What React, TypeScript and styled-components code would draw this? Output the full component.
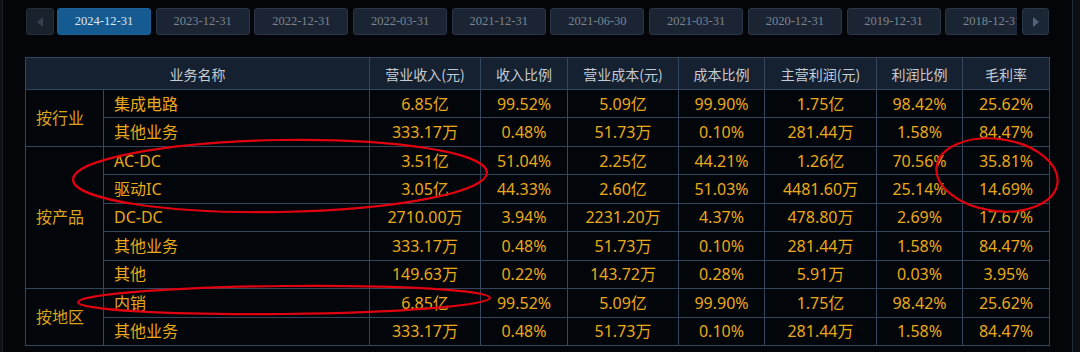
import { createGlobalStyle } from 'styled-components'
import styled from 'styled-components'

const GlobalStyle = createGlobalStyle`
  html, body {
    margin: 0;
    padding: 0;
    background: #0c0f13;
    overflow: hidden;
  }
`

const DATES = [
  '2024-12-31',
  '2023-12-31',
  '2022-12-31',
  '2022-03-31',
  '2021-12-31',
  '2021-06-30',
  '2021-03-31',
  '2020-12-31',
  '2019-12-31',
  '2018-12-31',
]

const HEADERS = ['营业收入(元)', '收入比例', '营业成本(元)', '成本比例', '主营利润(元)', '利润比例', '毛利率']
const COL_WIDTHS = [78, 266, 111, 87, 111, 86, 112, 86, 87]

type Row = { name: string; values: string[] }
type Group = { label: string; rows: Row[] }

const GROUPS: Group[] = [
  {
    label: '按行业',
    rows: [
      { name: '集成电路', values: ['6.85亿', '99.52%', '5.09亿', '99.90%', '1.75亿', '98.42%', '25.62%'] },
      { name: '其他业务', values: ['333.17万', '0.48%', '51.73万', '0.10%', '281.44万', '1.58%', '84.47%'] },
    ],
  },
  {
    label: '按产品',
    rows: [
      { name: 'AC-DC', values: ['3.51亿', '51.04%', '2.25亿', '44.21%', '1.26亿', '70.56%', '35.81%'] },
      { name: '驱动IC', values: ['3.05亿', '44.33%', '2.60亿', '51.03%', '4481.60万', '25.14%', '14.69%'] },
      { name: 'DC-DC', values: ['2710.00万', '3.94%', '2231.20万', '4.37%', '478.80万', '2.69%', '17.67%'] },
      { name: '其他业务', values: ['333.17万', '0.48%', '51.73万', '0.10%', '281.44万', '1.58%', '84.47%'] },
      { name: '其他', values: ['149.63万', '0.22%', '143.72万', '0.28%', '5.91万', '0.03%', '3.95%'] },
    ],
  },
  {
    label: '按地区',
    rows: [
      { name: '内销', values: ['6.85亿', '99.52%', '5.09亿', '99.90%', '1.75亿', '98.42%', '25.62%'] },
      { name: '其他业务', values: ['333.17万', '0.48%', '51.73万', '0.10%', '281.44万', '1.58%', '84.47%'] },
    ],
  },
]

const Panel = styled.div`
  position: relative;
  box-sizing: border-box;
  width: 1071px;
  min-height: 100vh;
  margin-left: 2px;
  padding: 8px 22px 0 22px;
  background: #030508;
  border-left: 1px solid #1a1f27;
  border-right: 1px solid #1d2a3a;
`

const TabBar = styled.div`
  display: flex;
  align-items: stretch;
  height: 27px;
  margin-left: 1px;
`

const ArrowButton = styled.div<{ dir: 'left' | 'right' }>`
  flex-shrink: 0;
  box-sizing: border-box;
  width: ${({ dir }) => (dir === 'left' ? 28 : 27)}px;
  margin-left: ${({ dir }) => (dir === 'left' ? 0 : 5)}px;
  margin-right: ${({ dir }) => (dir === 'left' ? 3 : 0)}px;
  display: flex;
  align-items: center;
  justify-content: center;
  background: ${({ dir }) => (dir === 'left' ? '#19212d' : '#1b2635')};
  border: 1px solid ${({ dir }) => (dir === 'left' ? '#252e3b' : '#2a3748')};
  border-radius: 3px;
`

const Triangle = styled.span<{ dir: 'left' | 'right' }>`
  width: 0;
  height: 0;
  border-top: 5px solid transparent;
  border-bottom: 5px solid transparent;
  ${({ dir }) =>
    dir === 'left' ? 'border-right: 6px solid #353f4d;' : 'border-left: 6px solid #52627a;'}
`

const TabStrip = styled.div`
  display: flex;
  gap: 4.7px;
  width: 960px;
  overflow: hidden;
`

const Tab = styled.div<{ active: boolean }>`
  flex-shrink: 0;
  box-sizing: border-box;
  width: 94px;
  display: flex;
  align-items: center;
  justify-content: center;
  font-family: 'Liberation Serif', 'Times New Roman', serif;
  font-size: 12.5px;
  color: ${({ active }) => (active ? '#dfe7f0' : '#7d8591')};
  background: ${({ active }) => (active ? '#155a90' : '#1a2433')};
  border: 1px solid ${({ active }) => (active ? '#1a6199' : '#2a3547')};
  border-radius: 3px;
  white-space: nowrap;
`

const Table = styled.table`
  margin-top: 22px;
  width: 1024px;
  table-layout: fixed;
  border-collapse: collapse;
  border: 1px solid #3b4b60;
  font-family: 'Noto Sans', 'Noto Sans CJK SC', sans-serif;
`

const HeadCell = styled.th`
  height: 31px;
  padding: 0;
  font-size: 14px;
  font-weight: normal;
  color: #c5cbd3;
  background: #152030;
  border: 1px solid #34465b;
  text-align: center;
  font-family: 'Noto Sans CJK SC', sans-serif;
`

const BodyRow = styled.tr`
  height: 28.44px;
`

const Cell = styled.td<{ align?: 'left' | 'center' }>`
  padding: 0 0 0 ${({ align }) => (align === 'left' ? '10px' : '0')};
  font-size: 16px;
  color: #eaa91b;
  background: #020509;
  border: 1px solid #34465b;
  text-align: ${({ align }) => align ?? 'center'};
  vertical-align: middle;
  white-space: nowrap;
  line-height: 1;
`

const GroupCell = styled(Cell)`
  color: #dba21e;
`

const Note = styled.div`
  width: 1024px;
  padding-top: 3px;
  text-align: right;
  font-family: 'Noto Sans CJK SC', sans-serif;
  font-size: 12px;
  color: #7e858f;
`

const Marks = styled.svg`
  position: absolute;
  top: 0;
  left: -3px;
  pointer-events: none;
`

export default function App() {
  return (
    <>
      <GlobalStyle />
      <Panel>
        <TabBar>
          <ArrowButton dir="left">
            <Triangle dir="left" />
          </ArrowButton>
          <TabStrip>
            {DATES.map((d, i) => (
              <Tab key={d} active={i === 0}>
                {d}
              </Tab>
            ))}
          </TabStrip>
          <ArrowButton dir="right">
            <Triangle dir="right" />
          </ArrowButton>
        </TabBar>

        <Table>
          <colgroup>
            {COL_WIDTHS.map((w, i) => (
              <col key={i} style={{ width: w }} />
            ))}
          </colgroup>
          <thead>
            <tr>
              <HeadCell colSpan={2}>业务名称</HeadCell>
              {HEADERS.map((h) => (
                <HeadCell key={h}>{h}</HeadCell>
              ))}
            </tr>
          </thead>
          <tbody>
            {GROUPS.map((g) =>
              g.rows.map((r, i) => (
                <BodyRow key={g.label + i}>
                  {i === 0 && (
                    <GroupCell align="left" rowSpan={g.rows.length}>
                      {g.label}
                    </GroupCell>
                  )}
                  <Cell align="left">{r.name}</Cell>
                  {r.values.map((v, j) => (
                    <Cell key={j}>{v}</Cell>
                  ))}
                </BodyRow>
              ))
            )}
          </tbody>
        </Table>
        <Note>注：经营分布数据来源于定期报告</Note>

        {/* red hand-drawn marks over the table */}
        <Marks width="1080" height="352" viewBox="0 0 1080 352">
          <g fill="none" stroke="#e0000f" strokeWidth="2.2">
            <ellipse cx="280" cy="176" rx="207" ry="36" transform="rotate(-1 280 176)" />
            <ellipse cx="997" cy="175" rx="61" ry="36" transform="rotate(8 997 175)" />
            <ellipse cx="284" cy="300" rx="206" ry="14" transform="rotate(-0.6 284 300)" />
          </g>
        </Marks>
      </Panel>
    </>
  )
}
